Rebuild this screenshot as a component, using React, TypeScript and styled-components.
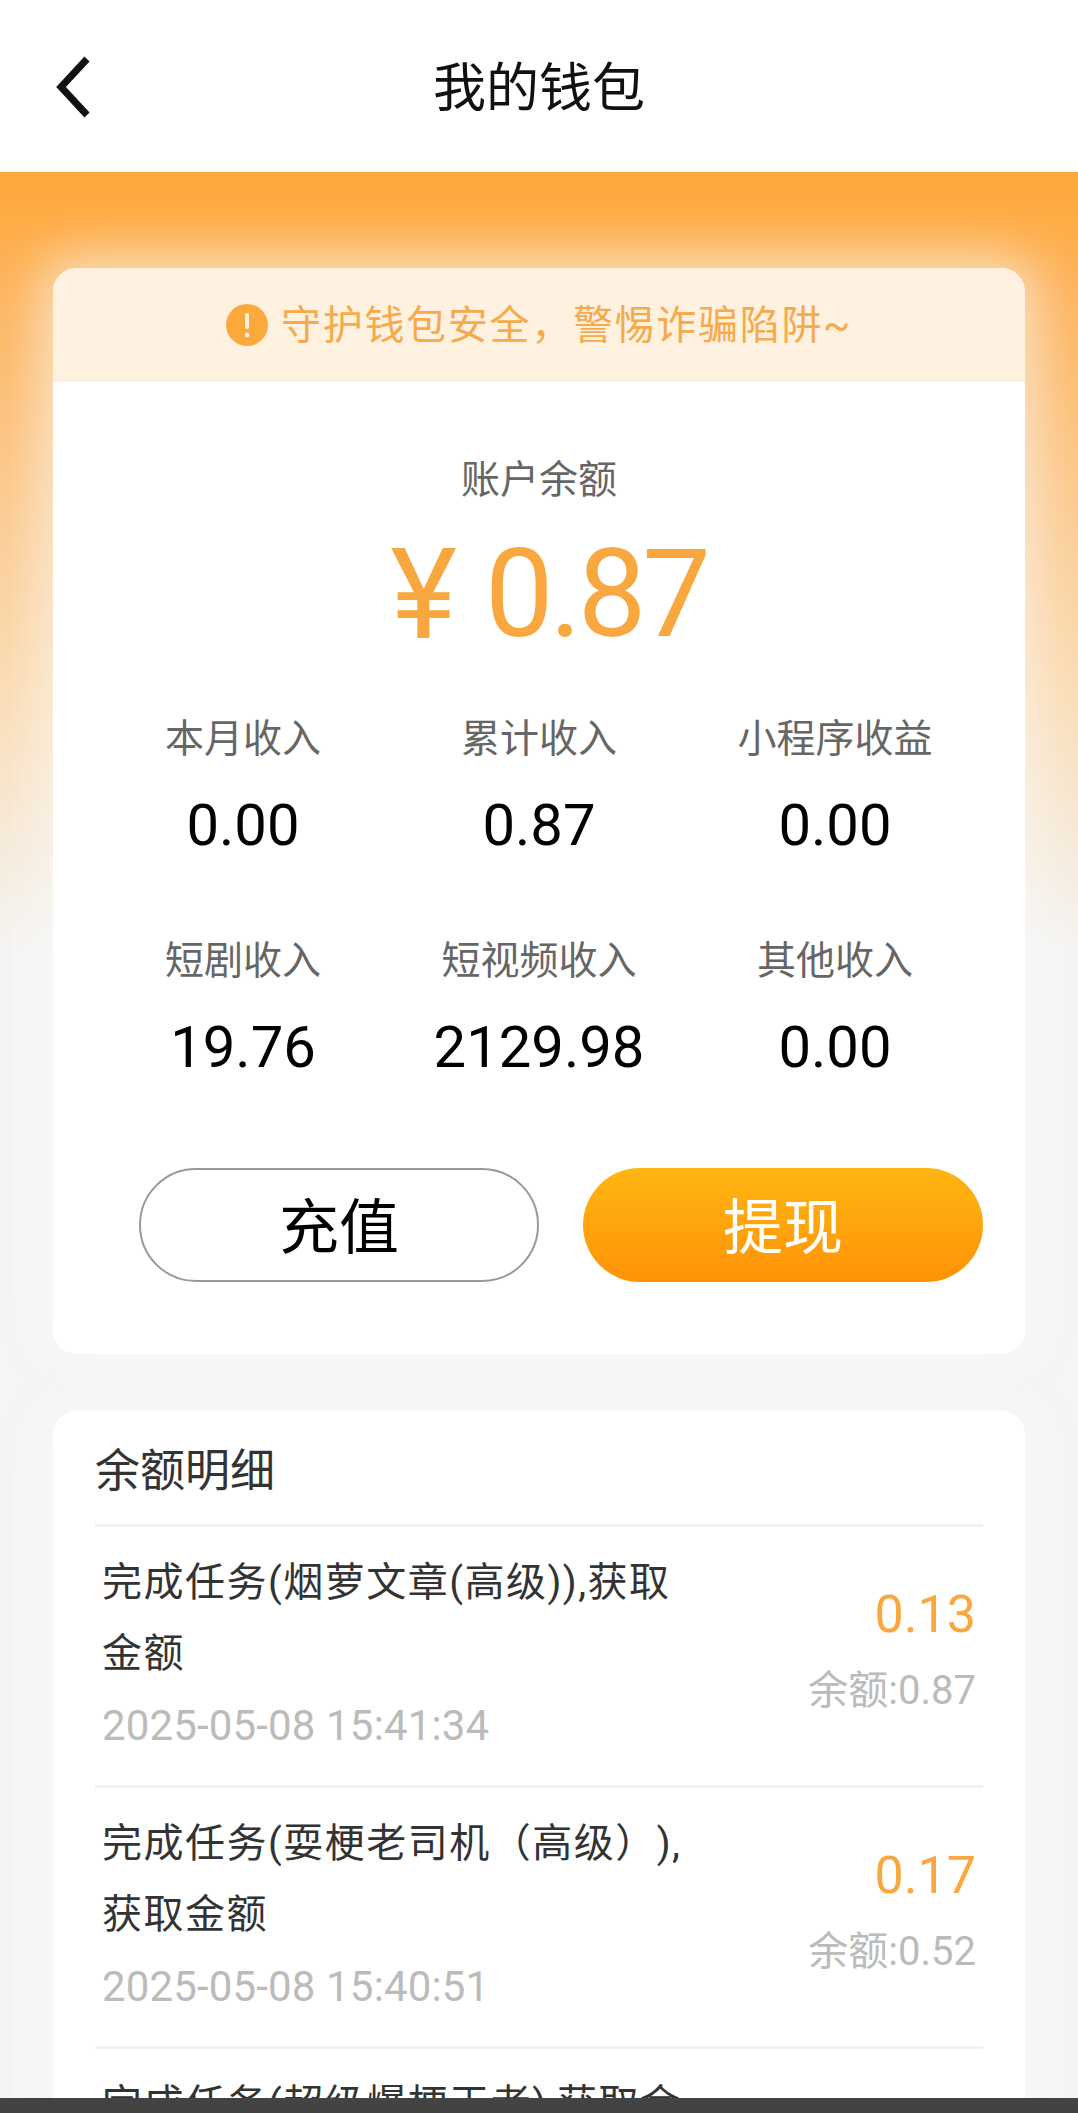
import styled, { createGlobalStyle } from 'styled-components'

const GlobalStyle = createGlobalStyle`
  html, body {
    margin: 0;
    padding: 0;
    background: #f5f5f5;
  }
  body {
    font-family: "Roboto", "Noto Sans CJK SC", sans-serif;
  }
`

const Page = styled.div`
  position: relative;
  width: 1078px;
  height: 2113px;
  overflow: hidden;
  background: #f5f5f5;
`

const Header = styled.header`
  height: 172px;
  padding-top: 6px;
  box-sizing: border-box;
  background: #fff;
  display: flex;
  align-items: center;
  justify-content: center;
  position: relative;
`

const BackIcon = styled.svg`
  position: absolute;
  left: 51px;
  top: 52px;
`

const Title = styled.h1`
  margin: 0;
  font-size: 53px;
  font-weight: 400;
  color: #111;
  line-height: 1;
`

const Content = styled.main`
  padding: 96px 53px 0;
  background: linear-gradient(#ffa738 0, #fdb45d 120px, #fcc98c 320px, #fbdcb4 520px, #f6ede0 700px, #f5f5f5 780px);
  display: flex;
  flex-direction: column;
  gap: 57px;
`

const Card = styled.section`
  background: #fff;
  border-radius: 24px;
  box-shadow: 0 0 50px 14px rgba(250, 250, 250, 0.6);
  overflow: hidden;
`

const Banner = styled.div`
  height: 114px;
  background: #fef1df;
  display: flex;
  align-items: center;
  justify-content: center;
  gap: 13px;
  color: #f6aa4c;
  font-size: 40px;
  letter-spacing: 1.7px;
`

const BannerText = styled.span`
  margin-bottom: 6px;
`

const BalanceBlock = styled.div`
  padding: 76px 42px 72px;
  display: flex;
  flex-direction: column;
  align-items: center;
`

const BalanceLabel = styled.div`
  font-size: 39px;
  line-height: 44px;
  color: #666;
`

const Amount = styled.div`
  margin-top: 27px;
  padding-left: 19px;
  font-size: 122px;
  line-height: 132px;
  color: #f8a83e;
  display: flex;
  align-items: center;
  gap: 28px;
`

const AmountSign = styled.span`
  font-size: 127px;
`

const AmountValue = styled.span`
  letter-spacing: -4px;
`

const StatsGrid = styled.div`
  width: 888px;
  margin-top: 56px;
  display: grid;
  grid-template-columns: repeat(3, 296px);
  row-gap: 81px;
`

const Stat = styled.div`
  display: flex;
  flex-direction: column;
  align-items: center;
  gap: 31px;
`

const StatLabel = styled.div`
  font-size: 39px;
  line-height: 44px;
  color: #666;
`

const StatValue = styled.div`
  font-size: 58px;
  line-height: 66px;
  color: #000;
`

const Actions = styled.div`
  margin-top: 88px;
  width: 844px;
  align-self: flex-end;
  display: flex;
  gap: 44px;
`

const ActionButton = styled.button<{ $primary?: boolean }>`
  width: 400px;
  height: 114px;
  border-radius: 57px;
  font-family: "Noto Sans CJK SC", sans-serif;
  font-size: 60px;
  padding: 0 0 6px;
  color: ${props => (props.$primary ? '#fff' : '#000')};
  background: ${props => (props.$primary ? 'linear-gradient(#ffb612, #ff9307)' : '#fff')};
  border: ${props => (props.$primary ? 'none' : '2px solid #999')};
`

const DetailCard = styled(Card)`
  padding: 0 42px;
`

const DetailTitle = styled.div`
  height: 116px;
  display: flex;
  align-items: center;
  font-size: 45px;
  color: #333;
  border-bottom: 3px solid #f2f2f2;
  box-sizing: border-box;
`

const Record = styled.div`
  height: 261px;
  box-sizing: border-box;
  border-bottom: 3px solid #f2f2f2;
  padding: 20px 7px 0;
  display: flex;
  justify-content: space-between;
`

const RecordMain = styled.div`
  width: 588px;
`

const RecordName = styled.div`
  font-size: 40px;
  line-height: 71px;
  letter-spacing: 1.5px;
  text-spacing-trim: space-all;
  color: #333;
`

const RecordDate = styled.div`
  margin-top: 7px;
  font-size: 42px;
  line-height: 60px;
  letter-spacing: 0.15px;
  color: #bbb;
`

const RecordSide = styled.div`
  padding-top: 39px;
  display: flex;
  flex-direction: column;
  align-items: flex-end;
  gap: 25px;
`

const RecordAmount = styled.div`
  font-size: 52px;
  line-height: 58px;
  color: #f8a83e;
`

const RecordBalance = styled.div`
  font-size: 40px;
  line-height: 44px;
  color: #bbb;
`

const BottomBar = styled.div`
  position: absolute;
  left: 0;
  right: 0;
  bottom: 0;
  height: 15px;
  background: #434343;
`

const stats = [
  { label: '本月收入', value: '0.00' },
  { label: '累计收入', value: '0.87' },
  { label: '小程序收益', value: '0.00' },
  { label: '短剧收入', value: '19.76' },
  { label: '短视频收入', value: '2129.98' },
  { label: '其他收入', value: '0.00' },
]

const records = [
  { name: '完成任务(烟萝文章(高级)),获取金额', date: '2025-05-08 15:41:34', amount: '0.13', balance: '余额:0.87' },
  { name: '完成任务(耍梗老司机（高级）),获取金额', date: '2025-05-08 15:40:51', amount: '0.17', balance: '余额:0.52' },
  { name: '完成任务(超级爆梗王者),获取金额', date: '2025-05-08 15:39:20', amount: '0.22', balance: '余额:0.35' },
]

function App() {
  return (
    <Page>
      <GlobalStyle />
      <Header>
        <BackIcon width="44" height="70" viewBox="0 0 44 70" fill="none">
          <polyline points="36,7 10,35 36,63" stroke="#111" strokeWidth="7" strokeLinecap="butt" strokeLinejoin="miter" />
        </BackIcon>
        <Title>我的钱包</Title>
      </Header>
      <Content>
        <Card>
          <Banner>
            <svg width="42" height="42" viewBox="0 0 42 42">
              <circle cx="21" cy="21" r="21" fill="#fba93b" />
              <rect x="19" y="9" width="4" height="16" rx="2" fill="#fef1df" />
              <circle cx="21" cy="31" r="2.4" fill="#fef1df" />
            </svg>
            <BannerText>守护钱包安全，警惕诈骗陷阱~</BannerText>
          </Banner>
          <BalanceBlock>
            <BalanceLabel>账户余额</BalanceLabel>
            <Amount>
              <AmountSign>¥</AmountSign>
              <AmountValue>0.87</AmountValue>
            </Amount>
            <StatsGrid>
              {stats.map(stat => (
                <Stat key={stat.label}>
                  <StatLabel>{stat.label}</StatLabel>
                  <StatValue>{stat.value}</StatValue>
                </Stat>
              ))}
            </StatsGrid>
            <Actions>
              <ActionButton>充值</ActionButton>
              <ActionButton $primary>提现</ActionButton>
            </Actions>
          </BalanceBlock>
        </Card>
        <DetailCard>
          <DetailTitle>余额明细</DetailTitle>
          {records.map(record => (
            <Record key={record.date}>
              <RecordMain>
                <RecordName>{record.name}</RecordName>
                <RecordDate>{record.date}</RecordDate>
              </RecordMain>
              <RecordSide>
                <RecordAmount>{record.amount}</RecordAmount>
                <RecordBalance>{record.balance}</RecordBalance>
              </RecordSide>
            </Record>
          ))}
        </DetailCard>
      </Content>
      <BottomBar />
    </Page>
  )
}

export default App
